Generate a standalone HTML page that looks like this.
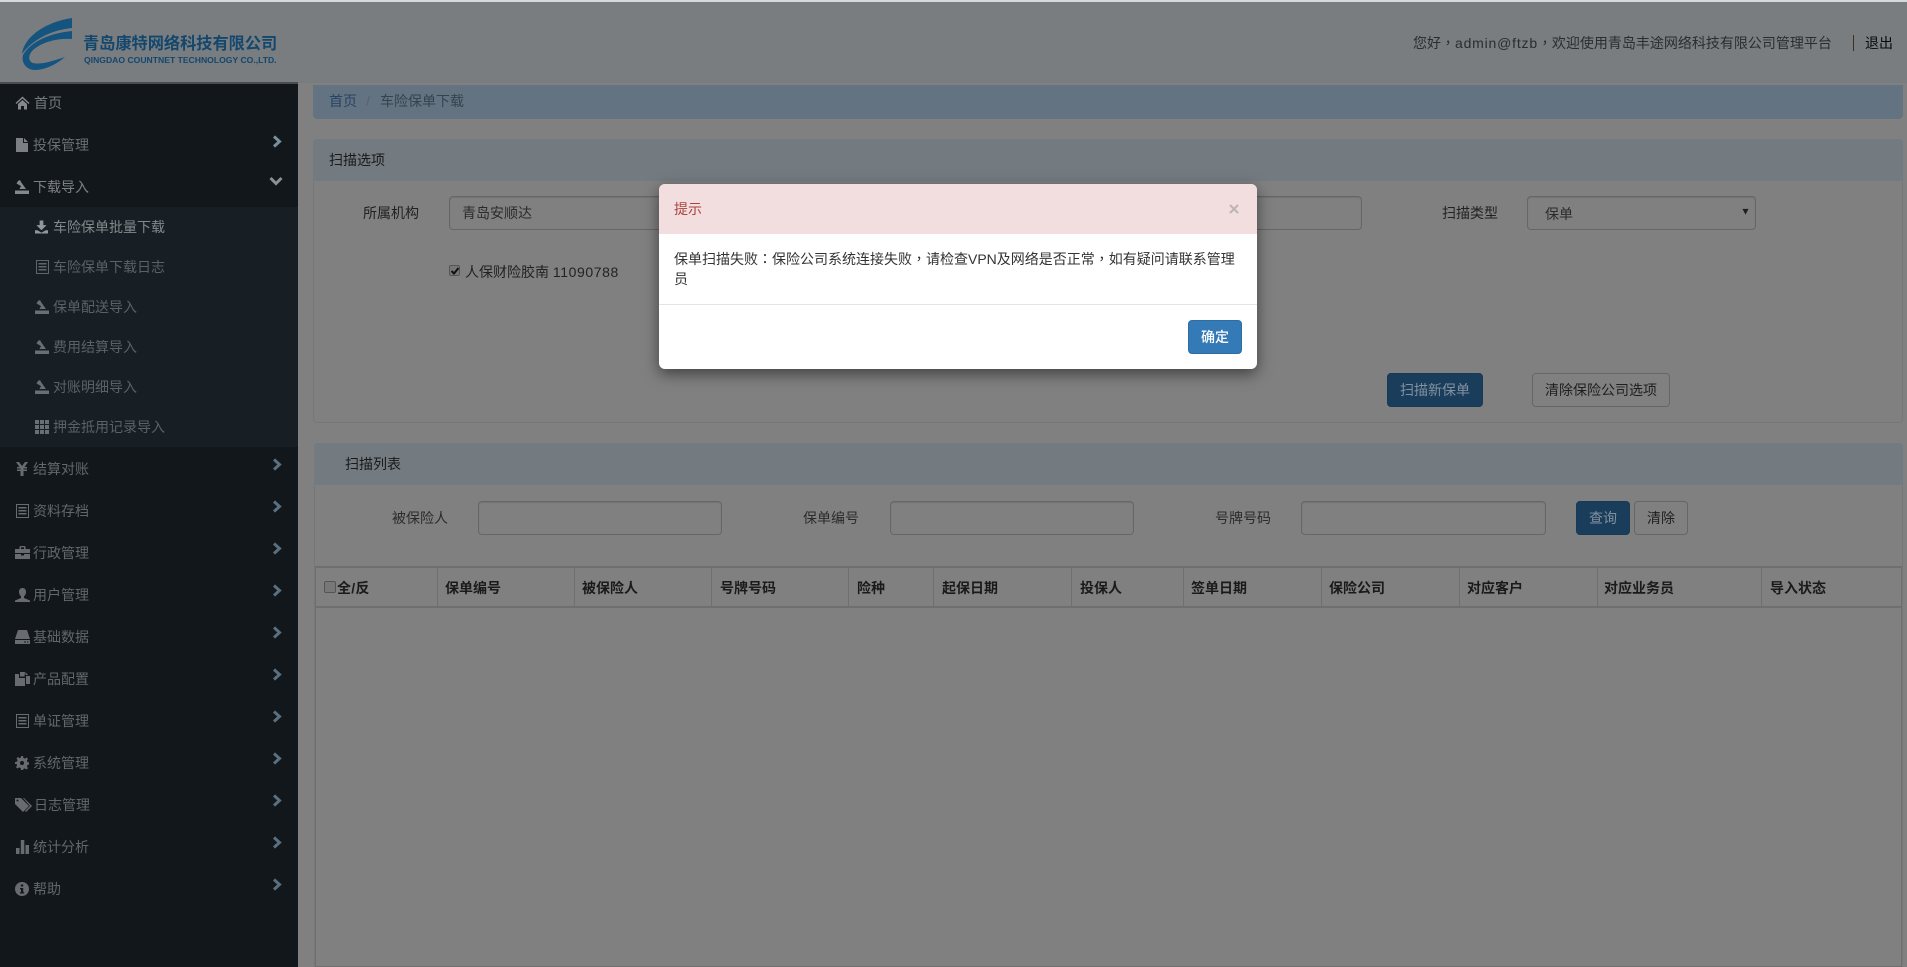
<!DOCTYPE html>
<html lang="zh-CN"><head><meta charset="utf-8"><title>扫描</title>
<style>
html,body{margin:0;padding:0;width:1907px;height:967px;overflow:hidden;background:#808080;font-family:"Liberation Sans","Noto Sans CJK SC",sans-serif;font-size:14px;color:#1a1a1a}
*{box-sizing:border-box}
.a{position:absolute}
.t{position:absolute;line-height:20px;white-space:nowrap}
.s{color:#62676b}
.ss{color:#5b6165}
.z{font-family:"Noto Sans CJK TC",sans-serif}
svg{position:absolute;display:block}
.ch{fill:none;stroke:#5a6f7f;stroke-width:3}
.in{position:absolute;height:34px;border:1px solid #666;border-radius:4px;box-shadow:inset 0 1px 1px rgba(0,0,0,.1)}
.btn{position:absolute;height:34px;border:1px solid #666;border-radius:4px;text-align:center;line-height:32px;white-space:nowrap}
.p{background:#193d5b;border-color:#173a55;color:#8291a0}
.v{position:absolute;top:568px;height:38px;width:1px;background:#6f6f6f}
.th{position:absolute;top:578px;line-height:20px;font-weight:bold;white-space:nowrap}
</style></head><body>
<!-- top strip -->
<div class="a" style="left:0;top:0;width:1907px;height:2px;background:#d8d8d8"></div>
<!-- header -->
<div class="a" style="left:0;top:2px;width:1907px;height:81px;background:#797d80"></div>
<div class="a" style="left:0;top:82px;width:298px;height:2px;background:#4a4d50"></div>
<svg style="left:15px;top:12px" width="65" height="62" viewBox="0 0 65 62"><path fill="#15547f" d="M57 6V16C37 18 18 27 7 42C9 25 30 10 57 6Z"/><path fill="#15547f" d="M57 19V27C42 26 27 30 18 38C13 43 13 49 18 51C25 53 38 49 50 45C42 52 30 58 20 58C11 58 6 50 8 43C16 29 36 21 57 19Z"/><path fill="#797d80" d="M21 49C28 49 35 43 40 42L44 45C36 48 28 51 21 49Z"/></svg>
<div class="t" style="left:83px;top:33px;font-size:16.2px;font-weight:bold;color:#13476d;line-height:22px">青岛康特网络科技有限公司</div>
<div class="t" style="left:84px;top:54px;font-size:8.6px;font-weight:bold;color:#13476d;line-height:12px">QINGDAO COUNTNET TECHNOLOGY CO.,LTD.</div>
<div class="t" style="left:1413px;top:33px;color:#2a2d30">您好<span class="z" lang="zh-TW">，</span><span style="letter-spacing:.8px">admin@ftzb</span><span class="z" lang="zh-TW">，</span>欢迎使用青岛丰途网络科技有限公司管理平台</div>
<div class="a" style="left:1853px;top:35px;width:1px;height:16px;background:#3a3020"></div>
<div class="t" style="left:1865px;top:33px;color:#0a0a0a">退出</div>

<!-- sidebar -->
<div class="a" style="left:0;top:84px;width:298px;height:883px;background:#11171b"></div>
<div class="a" style="left:0;top:207px;width:298px;height:240px;background:#171f24"></div>

<svg style="left:15px;top:96px" width="15" height="14" viewBox="0 0 14 14"><path fill="#85888a" d="M7 .5L0 7l1 1 6-5.500 6 5.500 1-1zM2.500 8L7 4l4.500 4v5.500H8.500V10h-3v3.500h-3z"/></svg>
<div class="t" style="left:34px;top:93px;color:#777b7e">首页</div>
<svg style="left:16px;top:138px" width="12" height="14" viewBox="0 0 12 14"><path fill="#7d8083" d="M0 0h7v5h5v9H0zM8 0l4 4H8z"/></svg>
<div class="t" style="left:33px;top:135px;color:#6b6f73">投保管理</div>
<svg style="left:272px;top:135px" width="11" height="13" viewBox="0 0 11 13"><path class="ch" style="stroke:#7a8f9e" d="M2 1.500L7.500 6.500 2 11.500"/></svg>
<svg style="left:15px;top:180px" width="14" height="14" viewBox="0 0 14 14"><path fill="#85888a" d="M0 10.500h14V14H0zM3 1l2-1 1 2 5 7H4.500L6 6 1.500 3.500z"/></svg>
<div class="t" style="left:33px;top:177px;color:#7e8184">下载导入</div>
<svg style="left:269px;top:176px" width="14" height="10" viewBox="0 0 14 10"><path class="ch" style="stroke:#8a9094" d="M1.500 2L7 7.500 12.500 2"/></svg>

<!-- submenu -->
<svg style="left:35px;top:220px" width="13" height="14" viewBox="0 0 14 14"><path fill="#94979a" d="M5 0h4v5h3.500L7 10.500 1.500 5H5zM0 10.500h2.500L7 13l4.500-2.500H14V14H0z"/></svg>
<div class="t" style="left:53px;top:217px;color:#85888a">车险保单批量下载</div>
<svg style="left:36px;top:260px" width="13" height="14" viewBox="0 0 13 14"><path fill="none" stroke="#5f6569" d="M.5.500h12v13H.5z"/><path fill="#5f6569" d="M2.500 3h8v1.500h-8zM2.500 6h8v1.500h-8zM2.500 9h8v1.500h-8z"/></svg>
<div class="t ss" style="left:53px;top:257px">车险保单下载日志</div>
<svg style="left:35px;top:300px" width="14" height="14" viewBox="0 0 14 14"><path fill="#6a6f73" d="M0 10.500h14V14H0zM3 1l2-1 1 2 5 7H4.500L6 6 1.500 3.500z"/></svg>
<div class="t ss" style="left:53px;top:297px">保单配送导入</div>
<svg style="left:35px;top:340px" width="14" height="14" viewBox="0 0 14 14"><path fill="#6a6f73" d="M0 10.500h14V14H0zM3 1l2-1 1 2 5 7H4.500L6 6 1.500 3.500z"/></svg>
<div class="t ss" style="left:53px;top:337px">费用结算导入</div>
<svg style="left:35px;top:380px" width="14" height="14" viewBox="0 0 14 14"><path fill="#6a6f73" d="M0 10.500h14V14H0zM3 1l2-1 1 2 5 7H4.500L6 6 1.500 3.500z"/></svg>
<div class="t ss" style="left:53px;top:377px">对账明细导入</div>
<svg style="left:35px;top:420px" width="14" height="14" viewBox="0 0 14 14"><path fill="#6a6f73" d="M0 0h4v4H0zM5 0h4v4H5zM10 0h4v4h-4zM0 5h4v4H0zM5 5h4v4H5zM10 5h4v4h-4zM0 10h4v4H0zM5 10h4v4H5zM10 10h4v4h-4z"/></svg>
<div class="t ss" style="left:53px;top:417px">押金抵用记录导入</div>

<!-- rest of menu -->
<svg style="left:16px;top:462px" width="12" height="14" viewBox="0 0 12 14"><path fill="#686c70" d="M0 0h3l3 4 3-4h3L8.500 5H11v1.500H7.500v1H11V9H7.500v5h-3V9H1V7.500h3.500v-1H1V5h2.500z"/></svg>
<div class="t s" style="left:33px;top:459px">结算对账</div>
<svg style="left:272px;top:458px" width="11" height="13" viewBox="0 0 11 13"><path class="ch" d="M2 1.500L7.500 6.500 2 11.500"/></svg>

<svg style="left:16px;top:504px" width="13" height="14" viewBox="0 0 13 14"><path fill="none" stroke="#686c70" d="M.5.500h12v13H.5z"/><path fill="#686c70" d="M2.500 3h8v1.500h-8zM2.500 6h8v1.500h-8zM2.500 9h8v1.500h-8z"/></svg>
<div class="t s" style="left:33px;top:501px">资料存档</div>
<svg style="left:272px;top:500px" width="11" height="13" viewBox="0 0 11 13"><path class="ch" d="M2 1.500L7.500 6.500 2 11.500"/></svg>

<svg style="left:15px;top:546px" width="15" height="13" viewBox="0 0 15 13"><path fill="#686c70" d="M4.500 3V1a1 1 0 011-1h4a1 1 0 011 1v2H15v4H0V3zM6 1.200V3h3V1.200zM0 8h6v1.500h3V8h6v5H0z"/></svg>
<div class="t s" style="left:33px;top:543px">行政管理</div>
<svg style="left:272px;top:542px" width="11" height="13" viewBox="0 0 11 13"><path class="ch" d="M2 1.500L7.500 6.500 2 11.500"/></svg>

<svg style="left:15px;top:588px" width="15" height="14" viewBox="0 0 15 14"><path fill="#686c70" d="M7.500 0c2.300 0 3.500 1.700 3.500 4 0 2-1 3.500-2 4.300V10l6 2.500V14H0v-1.500L6 10V8.300C5 7.500 4 6 4 4c0-2.300 1.200-4 3.500-4z"/></svg>
<div class="t s" style="left:33px;top:585px">用户管理</div>
<svg style="left:272px;top:584px" width="11" height="13" viewBox="0 0 11 13"><path class="ch" d="M2 1.500L7.500 6.500 2 11.500"/></svg>

<svg style="left:15px;top:630px" width="15" height="14" viewBox="0 0 15 14"><path fill="#686c70" d="M3 0h9l3 9H0zM0 10h15v4H0z"/><path fill="#11171b" d="M9 11.500h2v1H9zM12 11.500h1.500v1H12z"/></svg>
<div class="t s" style="left:33px;top:627px">基础数据</div>
<svg style="left:272px;top:626px" width="11" height="13" viewBox="0 0 11 13"><path class="ch" d="M2 1.500L7.500 6.500 2 11.500"/></svg>

<svg style="left:15px;top:672px" width="15" height="14" viewBox="0 0 15 14"><path fill="#686c70" d="M0 2h4v4h6v8H0zM5 0h5l-.5 4.500H5zM10.500 0L13 3h-2.500zM11 4h4v8h-4z"/></svg>
<div class="t s" style="left:33px;top:669px">产品配置</div>
<svg style="left:272px;top:668px" width="11" height="13" viewBox="0 0 11 13"><path class="ch" d="M2 1.500L7.500 6.500 2 11.500"/></svg>

<svg style="left:16px;top:714px" width="13" height="14" viewBox="0 0 13 14"><path fill="none" stroke="#686c70" d="M.5.500h12v13H.5z"/><path fill="#686c70" d="M2.500 3h8v1.500h-8zM2.500 6h8v1.500h-8zM2.500 9h8v1.500h-8z"/></svg>
<div class="t s" style="left:33px;top:711px">单证管理</div>
<svg style="left:272px;top:710px" width="11" height="13" viewBox="0 0 11 13"><path class="ch" d="M2 1.500L7.500 6.500 2 11.500"/></svg>

<svg style="left:15px;top:756px" width="14" height="14" viewBox="0 0 14 14"><path fill="#686c70" fill-rule="evenodd" d="M6 0h2l.4 2 1.500.6 1.700-1.100 1.400 1.400-1.100 1.700.6 1.500 2 .4v2l-2 .4-.6 1.500 1.100 1.700-1.400 1.400-1.700-1.100-1.500.6L8 14H6l-.4-2-1.500-.6-1.700 1.100L1 11.100l1.100-1.700L1.500 7.900 0 8V6l2-.4.600-1.500L1.500 2.400 2.900 1l1.700 1.100L6 1.500zM7 5a2 2 0 100 4 2 2 0 000-4z"/></svg>
<div class="t s" style="left:33px;top:753px">系统管理</div>
<svg style="left:272px;top:752px" width="11" height="13" viewBox="0 0 11 13"><path class="ch" d="M2 1.500L7.500 6.500 2 11.500"/></svg>

<svg style="left:15px;top:798px" width="18" height="14" viewBox="0 0 18 14"><path fill="#686c70" fill-rule="evenodd" d="M0 0h6l8 8-6 6-8-8zM2.500 1.500a1 1 0 100 2 1 1 0 000-2zM8 0h1l8 8-6 6-1-1 5-5z"/></svg>
<div class="t s" style="left:34px;top:795px">日志管理</div>
<svg style="left:272px;top:794px" width="11" height="13" viewBox="0 0 11 13"><path class="ch" d="M2 1.500L7.500 6.500 2 11.500"/></svg>

<svg style="left:16px;top:840px" width="13" height="14" viewBox="0 0 13 14"><path fill="#686c70" d="M0 8h3.500v6H0zM4.800 0h3.500v14H4.800zM9.500 5H13v9H9.500z"/></svg>
<div class="t s" style="left:33px;top:837px">统计分析</div>
<svg style="left:272px;top:836px" width="11" height="13" viewBox="0 0 11 13"><path class="ch" d="M2 1.500L7.500 6.500 2 11.500"/></svg>

<svg style="left:15px;top:882px" width="14" height="14" viewBox="0 0 14 14"><circle cx="7" cy="7" r="7" fill="#686c70"/><path fill="#11171b" d="M5.800 2.500h2.400v2H5.800zM5 6h3.200v4.200H9.200V11.500H5v-1.300h1V7.300H5z"/></svg>
<div class="t s" style="left:33px;top:879px">帮助</div>
<svg style="left:272px;top:878px" width="11" height="13" viewBox="0 0 11 13"><path class="ch" d="M2 1.500L7.500 6.500 2 11.500"/></svg>

<!-- breadcrumb -->
<div class="a" style="left:313px;top:85px;width:1590px;height:34px;background:#647382;border-radius:0 0 4px 4px"></div>
<div class="t" style="left:329px;top:91px;color:#264463">首页</div>
<div class="t" style="left:366px;top:91px;color:#56636f">/</div>
<div class="t" style="left:380px;top:91px;color:#36434f">车险保单下载</div>

<!-- panel 1 -->
<div class="a" style="left:313px;top:139px;width:1590px;height:284px;border:1px solid #777;border-radius:4px"></div>
<div class="a" style="left:313px;top:139px;width:1590px;height:42px;background:#737a80;border-radius:4px 4px 0 0"></div>
<div class="t" style="left:329px;top:150px">扫描选项</div>
<div class="t" style="left:363px;top:203px;color:#222">所属机构</div>
<div class="in" style="left:449px;top:196px;width:240px"></div>
<div class="t" style="left:462px;top:203px;color:#2b2b2b">青岛安顺达</div>
<div class="in" style="left:1100px;top:196px;width:262px"></div>
<div class="t" style="left:1442px;top:203px;color:#222">扫描类型</div>
<div class="in" style="left:1527px;top:196px;width:229px"></div>
<div class="t" style="left:1545px;top:204px;color:#2b2b2b">保单</div>
<svg style="left:1742px;top:208px" width="7" height="7" viewBox="0 0 8 8"><path fill="#1f1f1f" d="M.5 1h7L4 7.500z"/></svg>
<div class="a" style="left:449px;top:265px;width:11px;height:11px;background:#777;border:1px solid #555;border-radius:2px"></div>
<svg style="left:450px;top:266px" width="10" height="10" viewBox="0 0 10 10"><path fill="none" stroke="#111" stroke-width="2" d="M1.500 5L4 7.500 8.500 2"/></svg>
<div class="t" style="left:465px;top:262px;color:#222">人保财险胶南 <span style="letter-spacing:.6px">11090788</span></div>
<div class="btn p" style="left:1387px;top:373px;width:96px">扫描新保单</div>
<div class="btn" style="left:1532px;top:373px;width:138px;color:#1f1f1f">清除保险公司选项</div>

<!-- panel 2 -->
<div class="a" style="left:314px;top:443px;width:1589px;height:524px;border:1px solid #777;border-bottom:0;border-radius:4px 4px 0 0"></div>
<div class="a" style="left:314px;top:443px;width:1589px;height:42px;background:#737a80;border-radius:4px 4px 0 0"></div>
<div class="t" style="left:345px;top:454px">扫描列表</div>
<div class="t" style="left:392px;top:508px;color:#2b2b2b">被保险人</div>
<div class="in" style="left:478px;top:501px;width:244px"></div>
<div class="t" style="left:803px;top:508px;color:#2b2b2b">保单编号</div>
<div class="in" style="left:890px;top:501px;width:244px"></div>
<div class="t" style="left:1215px;top:508px;color:#2b2b2b">号牌号码</div>
<div class="in" style="left:1301px;top:501px;width:245px"></div>
<div class="btn p" style="left:1576px;top:501px;width:54px">查询</div>
<div class="btn" style="left:1634px;top:501px;width:54px;color:#1f1f1f">清除</div>

<!-- table -->
<div class="a" style="left:315px;top:566px;width:1587px;height:401px;border:1px solid #6f6f6f;border-top:2px solid #6f6f6f"></div>
<div class="a" style="left:316px;top:606px;width:1585px;height:2px;background:#6f6f6f"></div>
<div class="v" style="left:437px"></div><div class="v" style="left:574px"></div><div class="v" style="left:711px"></div><div class="v" style="left:848px"></div><div class="v" style="left:933px"></div><div class="v" style="left:1071px"></div><div class="v" style="left:1183px"></div><div class="v" style="left:1321px"></div><div class="v" style="left:1459px"></div><div class="v" style="left:1597px"></div><div class="v" style="left:1761px"></div>
<div class="a" style="left:324px;top:581px;width:12px;height:12px;background:#777;border:1px solid #555;border-radius:2px"></div>
<div class="th" style="left:337px;letter-spacing:.3px">全/反</div>
<div class="th" style="left:445px">保单编号</div>
<div class="th" style="left:582px">被保险人</div>
<div class="th" style="left:720px">号牌号码</div>
<div class="th" style="left:857px">险种</div>
<div class="th" style="left:942px">起保日期</div>
<div class="th" style="left:1080px">投保人</div>
<div class="th" style="left:1191px">签单日期</div>
<div class="th" style="left:1329px">保险公司</div>
<div class="th" style="left:1467px">对应客户</div>
<div class="th" style="left:1604px">对应业务员</div>
<div class="th" style="left:1770px">导入状态</div>

<!-- modal -->
<div class="a" style="left:659px;top:184px;width:598px;height:185px;background:#fff;border-radius:6px;box-shadow:0 5px 15px rgba(0,0,0,.5);overflow:hidden">
 <div class="a" style="left:0;top:0;width:598px;height:50px;background:#f2dede"></div>
 <div class="a" style="left:0;top:120px;width:598px;height:1px;background:#e5e5e5"></div>
</div>
<div class="t" style="left:674px;top:199px;color:#a94442">提示</div>
<svg style="left:1229px;top:204px" width="10" height="10" viewBox="0 0 10 10"><path fill="none" stroke="#bdb4b4" stroke-width="2" d="M1 1l8 8M9 1L1 9"/></svg>
<div class="t" style="left:674px;top:249px;color:#333">保单扫描失败<span class="z" lang="zh-TW">：</span>保险公司系统连接失败<span class="z" lang="zh-TW">，</span>请检查VPN及网络是否正常<span class="z" lang="zh-TW">，</span>如有疑问请联系管理</div>
<div class="t" style="left:674px;top:269px;color:#333">员</div>
<div class="btn" style="left:1188px;top:320px;width:54px;background:#337ab7;border-color:#2e6da4;color:#fff;font-weight:500">确定</div>
</body></html>
